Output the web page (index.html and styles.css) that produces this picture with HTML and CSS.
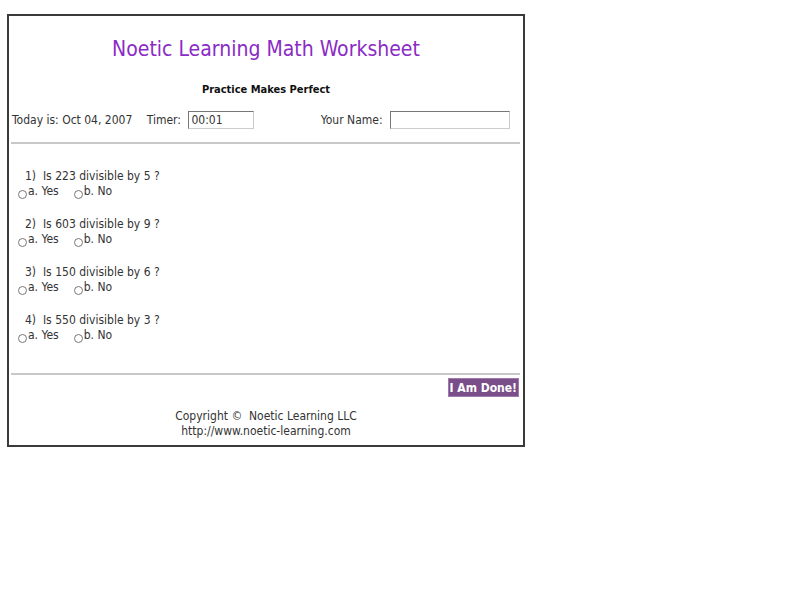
FILE: index.html
```html
<!DOCTYPE html>
<html lang="en">
<head>
  <meta charset="UTF-8" />
  <title>Noetic Learning Math Worksheet</title>
  <link rel="stylesheet" href="styles.css">
</head>
<body>
  <div class="worksheet">
    <h1 class="title">Noetic Learning Math Worksheet</h1>
    <p class="subtitle">Practice Makes Perfect</p>
    <div class="info-row">
      <div class="info-left">
        <span>Today is: Oct 04, 2007</span>
        <label for="timer">Timer:</label>
        <input type="text" id="timer" class="timer-box" value="00:01" />
      </div>
      <div class="info-right">
        <label for="yourName">Your Name:</label>
        <input type="text" id="yourName" class="name-box" />
      </div>
    </div>
    <hr class="rule" />
    <div class="questions">
      <div class="question">
        <div class="q-text">1)&nbsp; Is 223 divisible by 5 ?</div>
        <div class="answers">
          <label class="opt"><input type="radio" name="q1" />a. Yes</label>
          <label class="opt"><input type="radio" name="q1" />b. No</label>
        </div>
      </div>
      <div class="question">
        <div class="q-text">2)&nbsp; Is 603 divisible by 9 ?</div>
        <div class="answers">
          <label class="opt"><input type="radio" name="q2" />a. Yes</label>
          <label class="opt"><input type="radio" name="q2" />b. No</label>
        </div>
      </div>
      <div class="question">
        <div class="q-text">3)&nbsp; Is 150 divisible by 6 ?</div>
        <div class="answers">
          <label class="opt"><input type="radio" name="q3" />a. Yes</label>
          <label class="opt"><input type="radio" name="q3" />b. No</label>
        </div>
      </div>
      <div class="question">
        <div class="q-text">4)&nbsp; Is 550 divisible by 3 ?</div>
        <div class="answers">
          <label class="opt"><input type="radio" name="q4" />a. Yes</label>
          <label class="opt"><input type="radio" name="q4" />b. No</label>
        </div>
      </div>
    </div>
    <hr class="rule rule-bottom" />
    <div class="done-row">
      <button class="done-btn">I Am Done!</button>
    </div>
    <div class="footer">
      Copyright &copy;&nbsp; Noetic Learning LLC<br />
      http://www.noetic-learning.com
    </div>
  </div>
</body>
</html>
```

FILE: styles.css
```css
body {
  margin: 0;
  padding: 14px 0 0 7px;
  background-color: #fff;
  font-family: "DejaVu Sans Condensed", "DejaVu Sans", Tahoma, sans-serif;
  font-size: 12px;
  color: #333;
}
.worksheet {
  width: 514px;
  height: 429px;
  border: 2px solid #3a3a3a;
  box-sizing: content-box;
}
.title {
  margin: 0;
  padding-top: 20px;
  text-align: center;
  font-size: 21px;
  font-weight: normal;
  line-height: 26px;
  color: #8a2bc6;
}
.subtitle {
  margin: 21px 0 0;
  text-align: center;
  font-size: 11px;
  font-weight: bold;
  line-height: 14px;
  color: #111;
}
.info-row {
  display: flex;
  justify-content: space-between;
  align-items: center;
  margin-top: 13px;
  padding: 0 13px 0 3px;
  height: 20px;
}
.info-left span {
  margin-right: 11px;
}
.info-right label,
.info-left label {
  margin-right: 4px;
}
.timer-box,
.name-box {
  height: 18px;
  box-sizing: border-box;
  border: 1px solid #ccc;
  border-top-color: #777;
  border-left-color: #777;
  padding: 0 2px;
  font-family: inherit;
  font-size: 12px;
  color: #333;
  vertical-align: middle;
}
.timer-box {
  width: 66px;
}
.name-box {
  width: 120px;
}
.rule {
  margin: 12px 3px 0 2px;
  border: none;
  border-top: 2px solid #c8c8c8;
  height: 0;
}
.rule-bottom {
  margin-top: 0;
}
.questions {
  padding: 25px 0 0 9px;
  height: 204px;
}
.question {
  margin-bottom: 18px;
}
.q-text {
  padding-left: 7px;
  line-height: 15px;
}
.answers {
  display: flex;
  gap: 15px;
  line-height: 15px;
}
.opt {
  display: flex;
  align-items: center;
}
.opt input {
  width: 9px;
  height: 9px;
  margin: 6px 1px 0 0;
}
.done-row {
  display: flex;
  justify-content: flex-end;
  padding: 3px 4px 0 0;
}
.done-btn {
  background-color: #7a4e88;
  color: #fff;
  border: 1px solid #a07aac;
  padding: 0 1px;
  height: 19px;
  font-family: "DejaVu Sans Condensed", "DejaVu Sans", sans-serif;
  font-size: 12px;
  font-weight: bold;
  cursor: pointer;
}
.footer {
  margin-top: 12px;
  text-align: center;
  line-height: 15px;
  color: #333;
}
```
